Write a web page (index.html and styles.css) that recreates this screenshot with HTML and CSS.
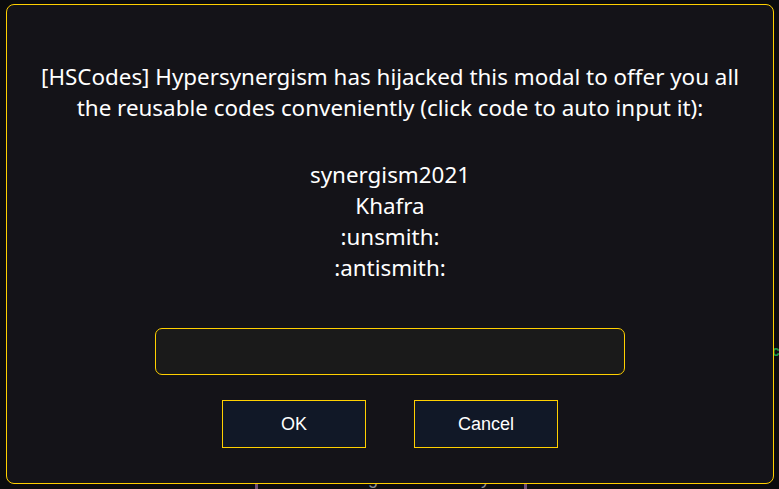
FILE: index.html
```html
<!DOCTYPE html>
<html>
<head>
<meta charset="utf-8">
<link rel="stylesheet" href="styles.css">
</head>
<body>
<div class="backdrop">
  <div class="save-bar">Save the game manually</div>
  <div class="side-text">ct</div>
</div>
<div class="modal">
  <p class="message">[HSCodes] Hypersynergism has hijacked this modal to offer you all the reusable codes conveniently (click code to auto input it):</p>
  <div class="codes">
    <div class="code">synergism2021</div>
    <div class="code">Khafra</div>
    <div class="code">:unsmith:</div>
    <div class="code">:antismith:</div>
  </div>
  <input class="code-input" type="text">
  <div class="actions">
    <button class="btn">OK</button>
    <button class="btn">Cancel</button>
  </div>
</div>
</body>
</html>
```
FILE: styles.css
```css
html, body {
  margin: 0;
  padding: 0;
  width: 779px;
  height: 489px;
  overflow: hidden;
  background: #0b0b0e;
  font-family: "Noto Sans", "Open Sans", sans-serif;
}

.backdrop {
  position: relative;
  width: 779px;
  height: 489px;
}

.save-bar {
  position: absolute;
  left: 255px;
  top: 466px;
  width: 266px;
  height: 30px;
  border-left: 3px solid #6d4d73;
  border-right: 3px solid #6d4d73;
  color: #8a8a8a;
  font-family: "Liberation Sans", Arial, sans-serif;
  font-size: 18px;
  text-align: center;
  line-height: 24px;
}

.side-text {
  position: absolute;
  left: 772px;
  top: 344px;
  color: #1f9a4a;
  font-family: "Liberation Sans", Arial, sans-serif;
  font-weight: bold;
  font-size: 14px;
  line-height: 14px;
}

.modal {
  position: absolute;
  left: 6px;
  top: 4px;
  width: 766px;
  height: 478px;
  border: 1px solid #ffd000;
  border-radius: 8px;
  background: #141318;
  color: #ffffff;
  display: flex;
  flex-direction: column;
  align-items: center;
}

.message {
  margin: 56px 20px 0;
  font-size: 22.4px;
  line-height: 31px;
  text-align: center;
}

.codes {
  margin-top: 36px;
  display: flex;
  flex-direction: column;
  align-items: center;
  font-size: 22.4px;
  line-height: 31px;
}

.code {
  cursor: pointer;
}

.code-input {
  margin-top: 45px;
  width: 470px;
  height: 47px;
  box-sizing: border-box;
  border: 1px solid #ffd000;
  border-radius: 7px;
  background: #1a1a1a;
  color: #fff;
  outline: none;
}

.actions {
  margin-top: 25px;
  display: flex;
  gap: 48px;
}

.btn {
  width: 144px;
  height: 48px;
  box-sizing: border-box;
  border: 1px solid #ffd000;
  background: #111827;
  color: #ffffff;
  font-family: "Liberation Sans", Arial, sans-serif;
  font-size: 18px;
  padding: 0;
}
```
